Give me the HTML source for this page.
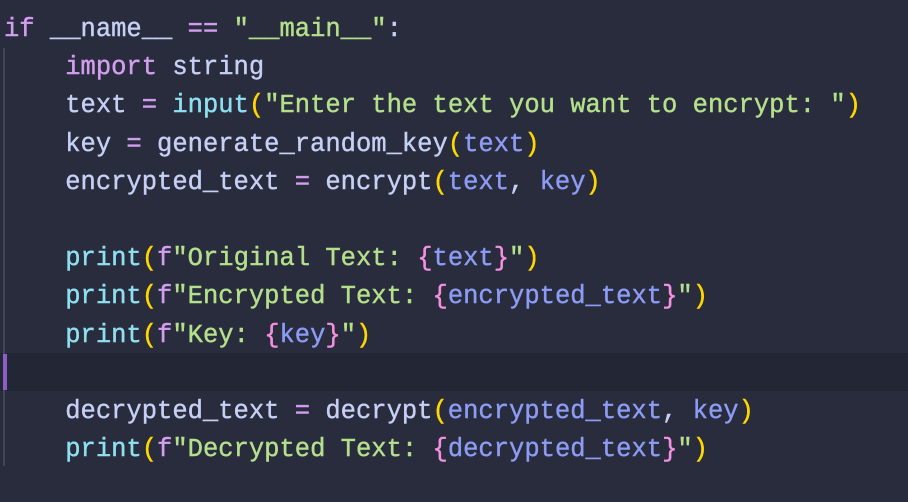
<!DOCTYPE html>
<html><head><style>
html,body{margin:0;padding:0;width:908px;height:502px;background:#292c3c;overflow:hidden}
.code{position:absolute;left:4px;top:11px;font-family:"Liberation Mono",monospace;font-size:25.5px;line-height:38.2px;color:#c6d0f5;white-space:pre;-webkit-text-stroke:0.4px currentColor}
.k{color:#d49ef0}.f{color:#8ee0f0}.s{color:#b4e08c}.p{color:#ffd700}.v{color:#8c9cf5}.b{color:#f490e0}
.guide{position:absolute;left:3px;top:48px;width:2px;height:418px;background:#414559}
.cur{position:absolute;left:0;top:353px;width:908px;height:38px;background:#232634}
.bar{position:absolute;left:3px;top:354px;width:4px;height:36px;background:#8c5cc8}
</style></head><body>
<div class="cur"></div><div class="guide"></div><div class="bar"></div>
<div class="code"><span class="k">if</span> __name__ <span class="k">==</span> <span class="s">"__main__"</span>:
    <span class="k">import</span> string
    text <span class="k">=</span> <span class="f">input</span><span class="p">(</span><span class="s">"Enter the text you want to encrypt: "</span><span class="p">)</span>
    key <span class="k">=</span> generate_random_key<span class="p">(</span><span class="v">text</span><span class="p">)</span>
    encrypted_text <span class="k">=</span> encrypt<span class="p">(</span><span class="v">text</span>, <span class="v">key</span><span class="p">)</span>

    <span class="f">print</span><span class="p">(</span><span class="k">f</span><span class="s">"Original Text: </span><span class="b">{</span><span class="v">text</span><span class="b">}</span><span class="s">"</span><span class="p">)</span>
    <span class="f">print</span><span class="p">(</span><span class="k">f</span><span class="s">"Encrypted Text: </span><span class="b">{</span><span class="v">encrypted_text</span><span class="b">}</span><span class="s">"</span><span class="p">)</span>
    <span class="f">print</span><span class="p">(</span><span class="k">f</span><span class="s">"Key: </span><span class="b">{</span><span class="v">key</span><span class="b">}</span><span class="s">"</span><span class="p">)</span>

    decrypted_text <span class="k">=</span> decrypt<span class="p">(</span><span class="v">encrypted_text</span>, <span class="v">key</span><span class="p">)</span>
    <span class="f">print</span><span class="p">(</span><span class="k">f</span><span class="s">"Decrypted Text: </span><span class="b">{</span><span class="v">decrypted_text</span><span class="b">}</span><span class="s">"</span><span class="p">)</span></div>
</body></html>
